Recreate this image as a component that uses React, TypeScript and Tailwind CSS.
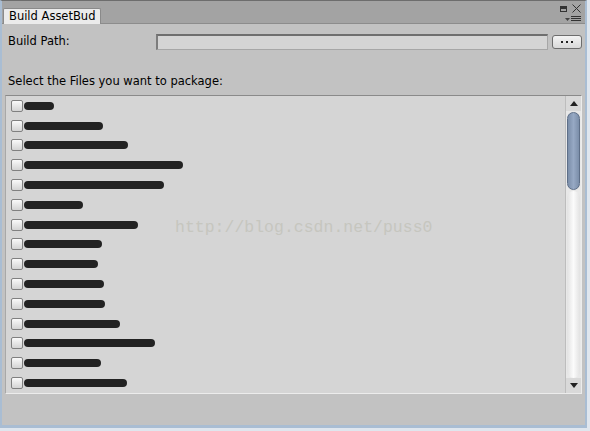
import React from "react";

const rows = [53, 102, 127, 182, 163, 82, 137, 101, 97, 103, 104, 119, 154, 100, 126];

export default function App() {
  return (
    <div className="w-[590px] h-[431px] bg-[#dfe6ee] overflow-hidden" style={{ fontFamily: '"DejaVu Sans", sans-serif' }}>
      <div className="w-[587px] h-[428px] flex flex-col border-l-[2px] border-r-[2px] border-b-[3px] border-[#a9bdd3] border-t border-t-[#6d6d6d]">
        {/* header */}
        <div className="h-[23px] bg-[#a3a3a3] flex items-end relative border-b border-[#8c8c8c]">
          <div className="ml-[1px] w-[98px] h-[16px] bg-[#ebebeb] border border-b-0 border-[#8a8a8a] rounded-t-[2px] text-[11.5px] leading-[15px] pl-[5px] text-black -mb-[1px]">
            Build AssetBud
          </div>
          <div className="absolute right-[4px] top-[3px] flex items-center gap-[5px]">
            <div className="w-[7px] h-[6px] border border-[#333] border-t-[3px]" />
            <svg width="9" height="9" viewBox="0 0 9 9">
              <path d="M0.5 0.5 L8.5 8.5 M8.5 0.5 L0.5 8.5" stroke="#333" strokeWidth="1" />
            </svg>
          </div>
          <div className="absolute right-[4px] top-[15px]">
            <svg width="16" height="6" viewBox="0 0 16 6">
              <path d="M0 2 L5 2 L2.5 5 Z" fill="#444" />
              <path d="M6 0.5 H16 M6 2.5 H16 M6 4.5 H16" stroke="#333" strokeWidth="1" />
            </svg>
          </div>
        </div>
        {/* content */}
        <div className="flex-1 bg-[#c2c2c2] flex flex-col">
          <div className="flex items-center h-[26px] mt-[5px] pl-[6px] pr-[3px]">
            <div className="w-[148px] text-[11.5px] text-black">Build Path:</div>
            <div className="flex-1 h-[16px] bg-[#d4d4d4] border border-[#a6a6a6] border-t-[2px] border-l-[2px] border-t-[#6e6e6e] border-l-[#7c7c7c]" />
            <div className="ml-[4px] w-[30px] h-[14px] rounded-[3px] border border-[#6d6d6d] bg-gradient-to-b from-[#f3f3f3] to-[#d9d9d9] flex items-center justify-center gap-[3px]">
              <div className="w-[2px] h-[2px] bg-[#222]" />
              <div className="w-[2px] h-[2px] bg-[#222]" />
              <div className="w-[2px] h-[2px] bg-[#222]" />
            </div>
          </div>
          <div className="h-[20px] mt-[16px] pl-[6px] text-[11.5px] leading-[20px] text-black">
            Select the Files you want to package:
          </div>
          <div className="mt-[4px] ml-[3px] mr-[3px] h-[299px] bg-[#d5d5d5] border-t border-t-[#8a8a8a] border-l border-l-[#a8a8a8] border-b border-b-[#ececec] border-r border-r-[#ececec] flex relative">
            <div className="flex-1 flex flex-col pl-[5px]">
              {rows.map((end, i) => (
                <div key={i} className="h-[20px] flex items-center">
                  <div className="w-[12px] h-[12px] rounded-[2px] border border-[#808080] bg-gradient-to-b from-[#fafafa] to-[#d4d4d4]" />
                  <div
                    className="h-[8px] rounded-full bg-[#222] ml-[1px]"
                    style={{ width: `${end - 23}px` }}
                  />
                </div>
              ))}
            </div>
            <div className="absolute left-[169px] top-[120px] text-[16.5px] text-[#c6c6bf] whitespace-nowrap" style={{ fontFamily: '"Liberation Mono", monospace' }}>
              http://blog.csdn.net/puss0
            </div>
            {/* scrollbar */}
            <div className="w-[16px] flex flex-col bg-[#e8e8e8] border-l border-[#bdbdbd]">
              <div className="h-[15px] flex items-center justify-center bg-[#d9d9d9]">
                <svg width="8" height="5" viewBox="0 0 8 5"><path d="M0 5 L4 0 L8 5 Z" fill="#222" /></svg>
              </div>
              <div className="h-[78px] mx-[1px] mt-[1px] rounded-full bg-gradient-to-r from-[#7b8ea9] via-[#97a9c4] to-[#7b8ea9] border border-[#5e6f88]" />
              <div className="flex-1 mx-[1px] mt-[1px] rounded-full bg-gradient-to-r from-[#e2e2e2] via-[#fbfbfb] to-[#e2e2e2]" />
              <div className="h-[15px] flex items-center justify-center bg-[#d9d9d9]">
                <svg width="8" height="5" viewBox="0 0 8 5"><path d="M0 0 L8 0 L4 5 Z" fill="#222" /></svg>
              </div>
            </div>
          </div>
        </div>
      </div>
    </div>
  );
}
